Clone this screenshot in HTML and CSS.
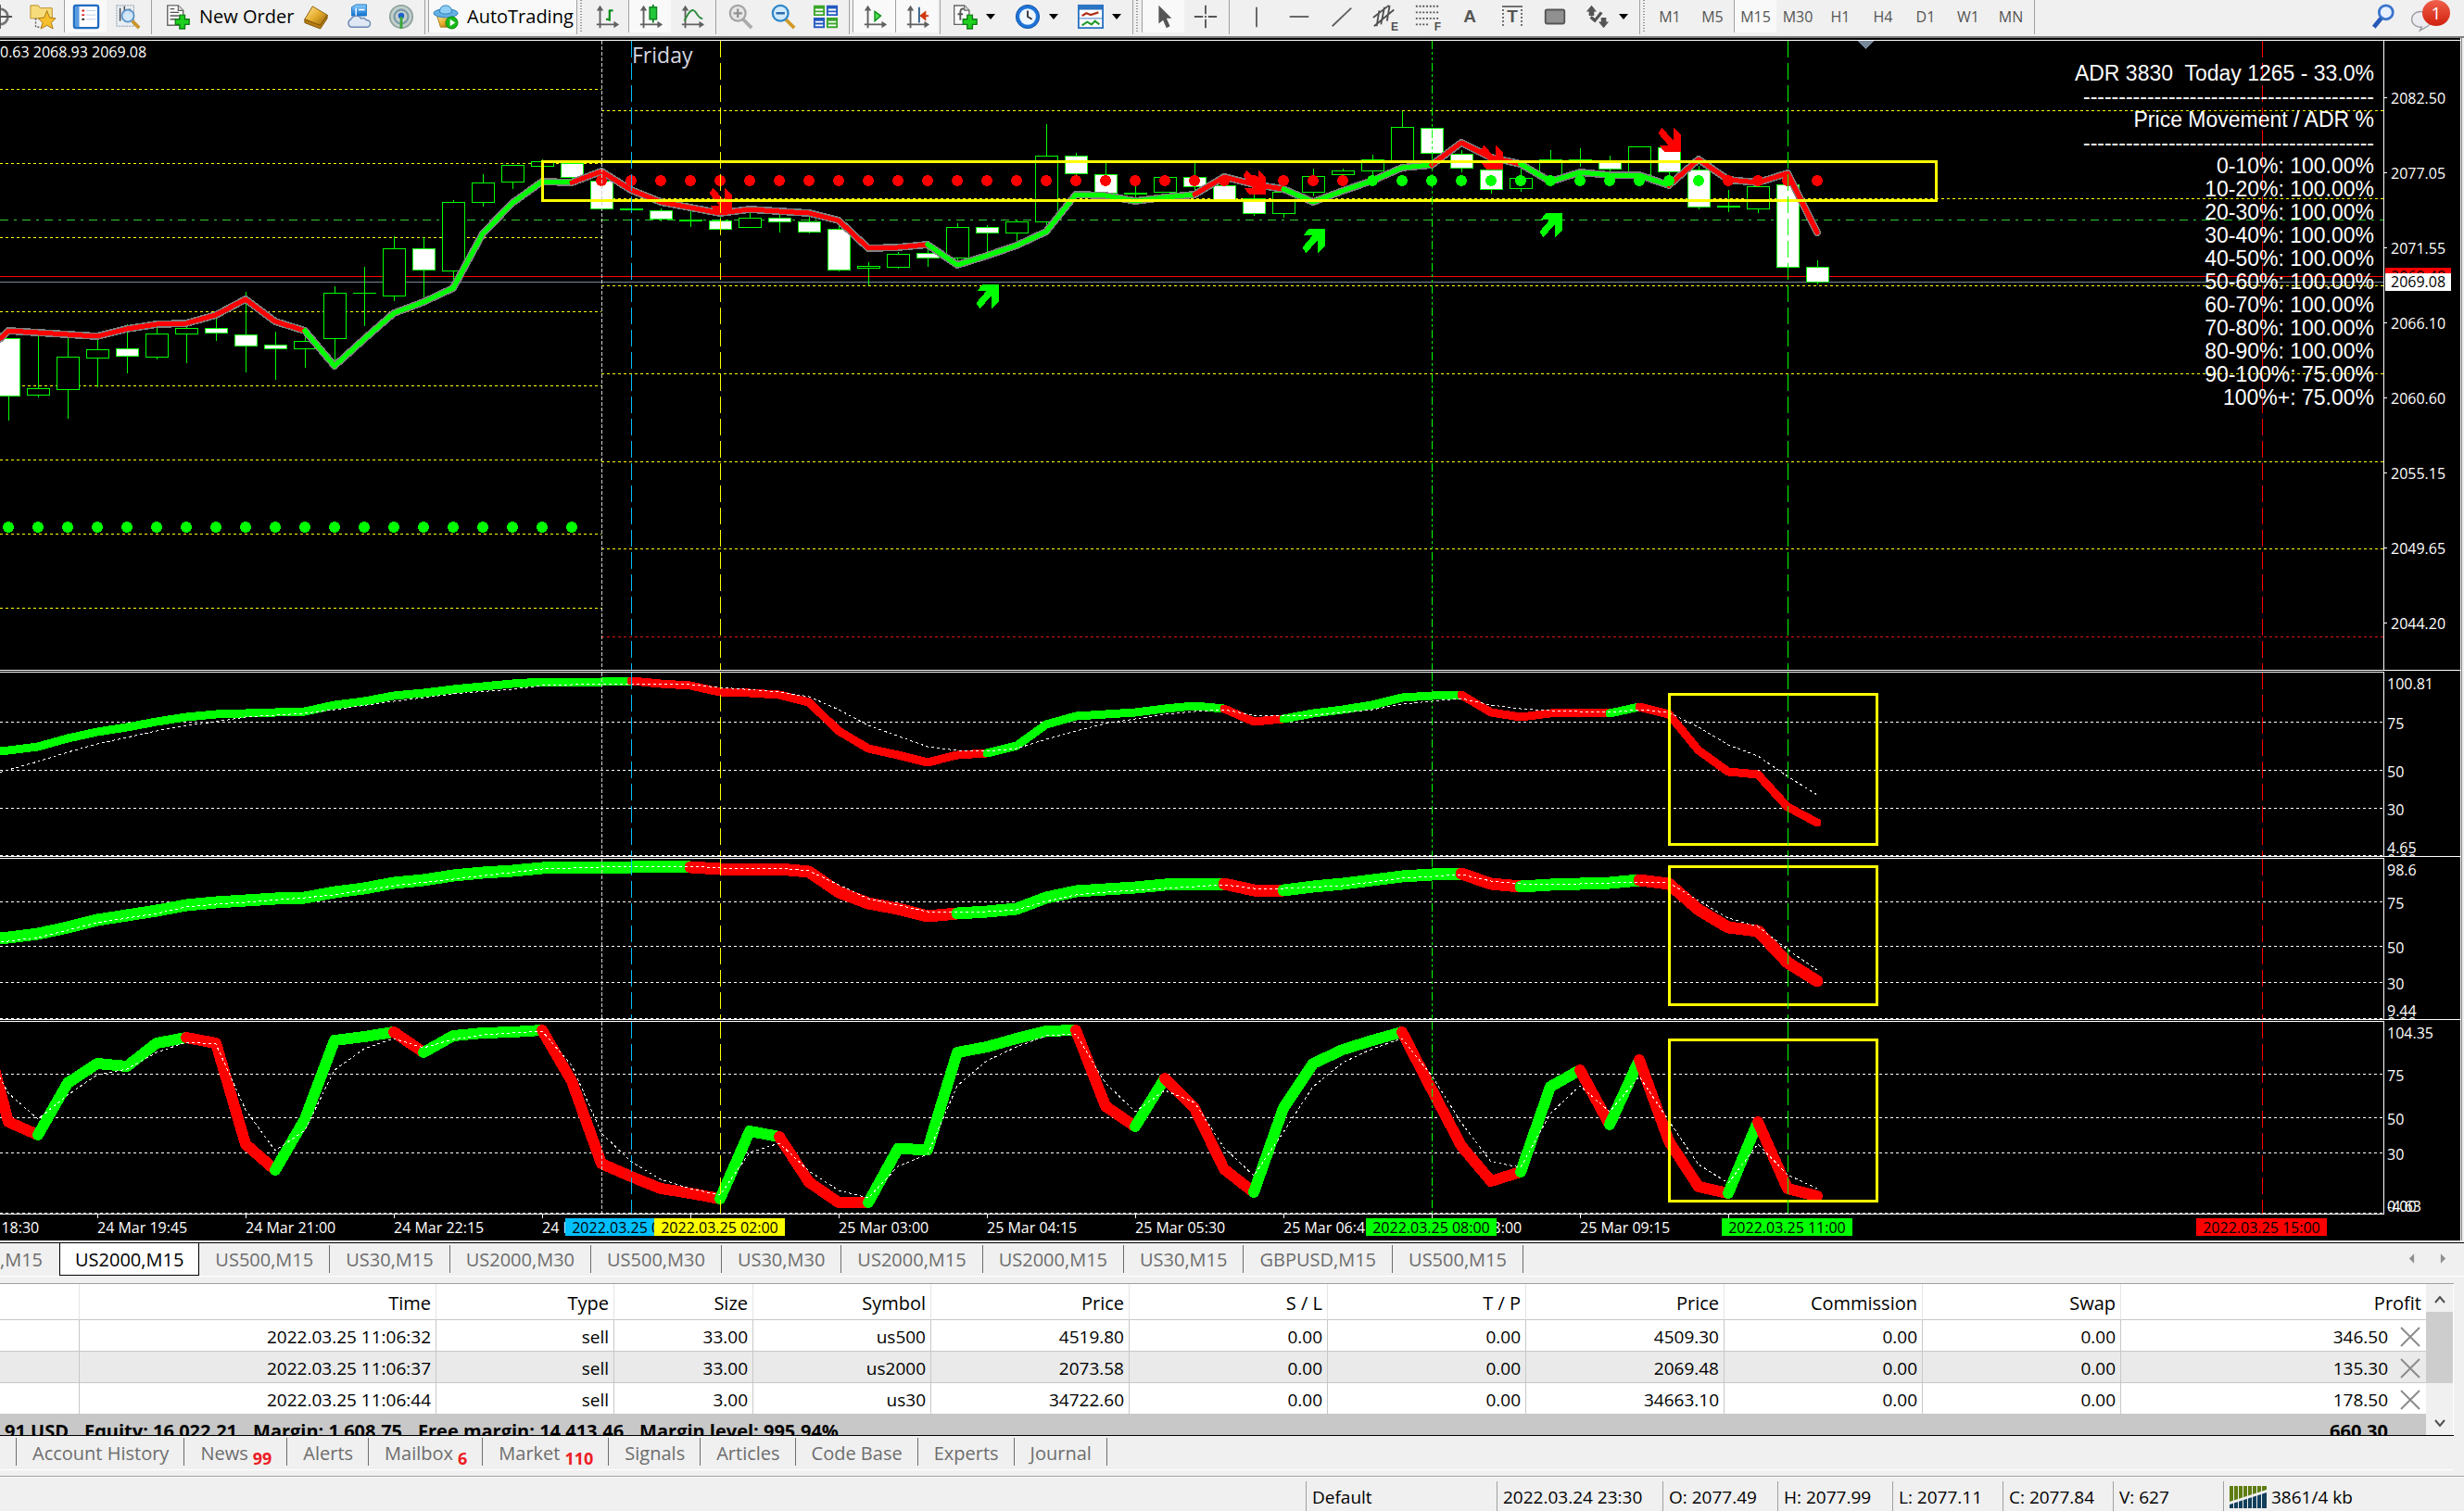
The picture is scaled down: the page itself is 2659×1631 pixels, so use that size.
FILE: index.html
```html
<!DOCTYPE html>
<html lang="en">
<head>
<meta charset="utf-8">
<title>US2000,M15</title>
<link rel="stylesheet" href="styles.css">
</head>
<body>
<svg width="0" height="0" class="defs" aria-hidden="true">
  <defs>
    <linearGradient id="gold" x1="0" y1="0" x2="1" y2="1"><stop offset="0" stop-color="#ffe89a"/><stop offset=".5" stop-color="#e5ac2c"/><stop offset="1" stop-color="#8f5f0c"/></linearGradient>
    <linearGradient id="sky" x1="0" y1="0" x2="0" y2="1"><stop offset="0" stop-color="#8fd0ff"/><stop offset="1" stop-color="#0a6fd0"/></linearGradient>
    <symbol id="axes" viewBox="0 0 30 30"><path d="M7 28V5M3 24H27" stroke="#606060" stroke-width="2" fill="none"/><path d="M3 8L7 2L11 8ZM23 20L29 24L23 28Z" fill="#606060"/></symbol>
    <symbol id="plus" viewBox="0 0 18 18"><path d="M6 1H12V6H17V12H12V17H6V12H1V6H6Z" fill="#1fd01f" stroke="#0b7d12" stroke-width="1.5"/></symbol>
    <symbol id="sheet" viewBox="0 0 22 26"><path d="M1 1H14L20 7V25H1Z" fill="#fafafa" stroke="#666" stroke-width="1.6"/><path d="M14 1V7H20" fill="#ddd" stroke="#666" stroke-width="1.4"/></symbol>
    <symbol id="arrow" viewBox="0 0 24 26"><path d="M4 0L16 13L17 0L24 7V26H7L1 19H11L0 6Z"/></symbol>
  </defs>
</svg>

<header class="toolbar">
  <button class="tool tool-first" aria-label="Crosshair info"><svg viewBox="0 0 30 30"><circle cx="15" cy="15" r="9" fill="none" stroke="#777" stroke-width="3"/><path d="M15 1V29M1 15H29" stroke="#555" stroke-width="2"/></svg></button>
  <button class="tool" aria-label="Navigator"><svg viewBox="0 0 30 30"><path d="M1 2H10L12 5H26V17H1Z" fill="#f7dc7c" stroke="#b88a1e"/><path d="M7 17V27H14" fill="none" stroke="#555" stroke-width="1.5" stroke-dasharray="2"/><path d="M20 8L23 16L30 17L25 22L27 29L20 25L13 29L15 22L10 17L17 16Z" fill="#f6bf2e" stroke="#a8740d"/></svg></button>
  <button class="tool pressed" aria-label="Terminal"><svg viewBox="0 0 30 30"><rect x="1" y="2" width="28" height="26" rx="2" fill="#fff" stroke="#1f6cc0" stroke-width="2.5"/><path d="M2 3H7V27H2Z" fill="#5a9ce0"/><path d="M10 8H13M10 13H13" stroke="#e02020" stroke-width="2"/><path d="M10 18H13" stroke="#222" stroke-width="2"/><path d="M15 8H26M15 13H26M15 18H26" stroke="#b8cce6"/></svg></button>
  <button class="tool" aria-label="Strategy tester"><svg viewBox="0 0 30 30"><rect x="2" y="2" width="20" height="24" fill="#e8eef4" stroke="#8a95a0" stroke-dasharray="2 1"/><path d="M6 5V20M11 3V12M17 6V12" stroke="#444" stroke-width="1.5"/><circle cx="15" cy="14" r="7" fill="#cfe6fb" fill-opacity=".9" stroke="#5f93c8" stroke-width="2"/><path d="M20 20L28 28" stroke="#c8952b" stroke-width="4"/></svg></button>
  <span class="sep"></span>
  <button class="tool wide order"><svg viewBox="0 0 30 30"><use href="#sheet" x="2" y="1" width="21" height="25"/><path d="M6 10H16M6 14H16M6 18H13M6 6H11" stroke="#555" stroke-width="1.5"/><use href="#plus" x="11" y="12" width="18" height="18"/></svg>New Order</button>
  <button class="tool" aria-label="MetaEditor"><svg viewBox="0 0 30 30"><path d="M11 3L28 13L20 26L2 18Z" fill="url(#gold)" stroke="#8a5c0a"/><path d="M2 18V22L20 29L28 17V13L20 25Z" fill="#b57c12" stroke="#7a5008"/></svg></button>
  <button class="tool" aria-label="Market"><svg viewBox="0 0 30 30"><path d="M7 4L12 1H24V14H7Z" fill="url(#sky)" stroke="#1a74c4"/><path d="M12 5V15M15 7H22" stroke="#fff" stroke-width="1.5"/><path d="M6 27A5 5 0 0 1 6 18A7 7 0 0 1 18 17A5 5 0 0 1 24 19A4 4 0 0 1 25 27Z" fill="#dfe8f5" stroke="#6a86b4" stroke-width="1.5"/></svg></button>
  <button class="tool" aria-label="Signals"><svg viewBox="0 0 30 30"><circle cx="15" cy="15" r="13" fill="#c4d0cc" stroke="#8fa3a0" stroke-width="2"/><circle cx="15" cy="15" r="8" fill="none" stroke="#7b9aa8" stroke-width="2.5"/><circle cx="15" cy="14" r="3.5" fill="#1f5fd0"/><path d="M15 15V29" stroke="#38a838" stroke-width="3"/></svg></button>
  <span class="sep"></span>
  <button class="tool wide auto pressed"><svg viewBox="0 0 30 30"><path d="M5 14H24L21 27H9Z" fill="url(#gold)" stroke="#a8740d"/><ellipse cx="15" cy="11" rx="14" ry="5" fill="#64b0e4" stroke="#2c7fb8"/><path d="M8 10Q8 2 15 2Q22 2 22 10Q15 14 8 10Z" fill="#8fd0f4" stroke="#2c7fb8"/><circle cx="22" cy="22" r="7" fill="#18b818" stroke="#0c860c"/><path d="M20 18L26 22L20 26Z" fill="#fff"/></svg>AutoTrading</button>
  <span class="grip"></span>
  <button class="tool" aria-label="Bar chart"><svg viewBox="0 0 30 30"><use href="#axes" width="30" height="30"/><path d="M18 7V20M18 8H22M14 18H18" stroke="#0c8f1c" stroke-width="2.4" fill="none"/></svg></button>
  <button class="tool pressed" aria-label="Candlesticks"><svg viewBox="0 0 30 30"><use href="#axes" width="30" height="30"/><path d="M18 1V22" stroke="#0c7f1c" stroke-width="2"/><rect x="14" y="4" width="8" height="14" fill="#22c83a" stroke="#0c7f1c" stroke-width="1.5"/></svg></button>
  <button class="tool" aria-label="Line chart"><svg viewBox="0 0 30 30"><use href="#axes" width="30" height="30"/><path d="M6 20Q14 2 19 10T27 17" stroke="#2c8a3a" stroke-width="2" fill="none"/></svg></button>
  <span class="sep"></span>
  <button class="tool" aria-label="Zoom in"><svg viewBox="0 0 30 30"><path d="M18 18L28 28" stroke="#aaa" stroke-width="4"/><circle cx="12" cy="11" r="9" fill="#e6e6e6" stroke="#a4a4a4" stroke-width="2.4"/><path d="M7 11H17M12 6V16" stroke="#909090" stroke-width="2.4"/></svg></button>
  <button class="tool" aria-label="Zoom out"><svg viewBox="0 0 30 30"><path d="M18 18L28 28" stroke="#d09a28" stroke-width="4"/><circle cx="12" cy="11" r="9" fill="#cfeafc" stroke="#2f86c8" stroke-width="2.4"/><path d="M7 11H17" stroke="#2468a8" stroke-width="2.6"/></svg></button>
  <button class="tool" aria-label="Tile windows"><svg viewBox="0 0 30 30"><path d="M1 2H14V14H1ZM16 16H29V28H16Z" fill="#3aa52a"/><path d="M16 2H29V14H16ZM1 16H14V28H1Z" fill="#2458c0"/><path d="M3 6H12V8H3ZM3 10H12V12H3ZM18 6H27V8H18ZM18 10H27V12H18ZM3 20H12V22H3ZM3 24H12V26H3ZM18 20H27V22H18ZM18 24H27V26H18Z" fill="#fff"/></svg></button>
  <span class="sep"></span>
  <button class="tool pressed" aria-label="Auto scroll"><svg viewBox="0 0 30 30"><use href="#axes" width="30" height="30"/><path d="M15 9L22 14L15 20Z" fill="#4fe04f" stroke="#0c8f1c" stroke-width="1.5"/></svg></button>
  <button class="tool pressed" aria-label="Chart shift"><svg viewBox="0 0 30 30"><use href="#axes" width="30" height="30"/><path d="M17 4V22" stroke="#2a5a8a" stroke-width="2"/><path d="M28 14H22M24 10L19 14L24 18Z" stroke="#d03a10" stroke-width="2" fill="#d03a10"/></svg></button>
  <span class="sep"></span>
  <button class="tool drop" aria-label="Indicators"><svg viewBox="0 0 30 30"><use href="#sheet" x="2" y="1" width="20" height="24"/><path d="M14 6Q10 5 10 10V19M7 12H13" stroke="#555" stroke-width="2" fill="none"/><use href="#plus" x="12" y="12" width="18" height="18"/></svg></button>
  <button class="tool drop" aria-label="Periods"><svg viewBox="0 0 30 30"><circle cx="15" cy="15" r="13.5" fill="#1e74d8" stroke="#0c4ea0"/><circle cx="15" cy="15" r="9.5" fill="#eef6ff"/><path d="M15 8V15L20 18" stroke="#333" stroke-width="2" fill="none"/></svg></button>
  <button class="tool drop" aria-label="Templates"><svg viewBox="0 0 30 30"><rect x="1" y="2" width="28" height="26" fill="#fff" stroke="#2c74c4" stroke-width="2"/><path d="M1 2H29V7H1Z" fill="#2c74c4"/><path d="M5 14L10 11L15 13L24 10" stroke="#b03018" stroke-width="2.4" fill="none"/><path d="M2 17H28" stroke="#2c74c4"/><path d="M5 25L11 21L16 24L20 20L25 24" stroke="#1f9a2a" stroke-width="2.2" fill="none"/></svg></button>
  <span class="grip"></span>
  <button class="tool pressed" aria-label="Cursor"><svg viewBox="0 0 30 30"><path d="M9 2V23L14 19L18 28L22 26L18 17H24Z" fill="#555"/></svg></button>
  <button class="tool" aria-label="Crosshair"><svg viewBox="0 0 30 30"><path d="M15 2V12M15 18V28M2 15H12M18 15H28M14 15H16" stroke="#555" stroke-width="2"/></svg></button>
  <span class="sep sep-wide"></span>
  <button class="tool" aria-label="Vertical line"><svg viewBox="0 0 30 30"><path d="M15 4V27" stroke="#606060" stroke-width="2"/></svg></button>
  <button class="tool" aria-label="Horizontal line"><svg viewBox="0 0 30 30"><path d="M4 15H26" stroke="#606060" stroke-width="2"/></svg></button>
  <button class="tool" aria-label="Trendline"><svg viewBox="0 0 30 30"><path d="M4 26L26 5" stroke="#606060" stroke-width="2"/></svg></button>
  <button class="tool" aria-label="Equidistant channel"><svg viewBox="0 0 30 30"><path d="M2 16L20 2M3 26L26 7M9 8L6 26M15 4L11 24M21 2L18 20" stroke="#505050" stroke-width="2"/></svg><small>E</small></button>
  <button class="tool" aria-label="Fibonacci"><svg viewBox="0 0 30 30"><path d="M2 3H28M2 10H28M2 17H28M2 24H18" stroke="#505050" stroke-width="2" stroke-dasharray="2"/></svg><small>F</small></button>
  <button class="tool glyph">A</button>
  <button class="tool glyph boxed">T</button>
  <button class="tool" aria-label="Rectangle"><svg viewBox="0 0 30 30"><rect x="4" y="7" width="22" height="16" rx="2" fill="#909090" stroke="#555" stroke-width="2"/></svg></button>
  <button class="tool drop" aria-label="Arrows"><svg viewBox="0 0 30 30"><path d="M8 2L14 9H11V14H5V9H2ZM22 28L16 21H19V16H25V21H28ZM6 17L12 22L21 11L18 9L12 17L8 14Z" fill="#555"/></svg></button>
  <span class="grip"></span>
  <button class="tool frame">M1</button>
  <button class="tool frame">M5</button>
  <button class="tool frame pressed">M15</button>
  <button class="tool frame">M30</button>
  <button class="tool frame">H1</button>
  <button class="tool frame">H4</button>
  <button class="tool frame">D1</button>
  <button class="tool frame">W1</button>
  <button class="tool frame">MN</button>
  <span class="sep"></span>
  <span class="spacer"></span>
  <button class="tool" aria-label="Search"><svg viewBox="0 0 30 30"><path d="M13 16L4 27" stroke="#2458b8" stroke-width="5"/><circle cx="18" cy="10" r="8" fill="#e6f0ff" stroke="#3a74cc" stroke-width="3"/></svg></button>
  <button class="tool chat" aria-label="Messages"><svg viewBox="0 0 30 30"><path d="M14 10A10 9 0 1 0 11 27L9 31L18 26A10 9 0 0 0 14 10Z" fill="#ececf0" stroke="#9a9aa4" stroke-width="1.5"/></svg><b>1</b></button>
</header>

<main class="chart">
  <section class="pane pane-price">
    <div class="plot">
      <svg id="price" viewBox="0 44 2572 679" preserveAspectRatio="none"></svg>
      <p class="ohlc">0.63 2068.93 2069.08</p>
      <p class="day">Friday</p>
      <div class="adr">
        <p>ADR 3830&nbsp; Today 1265 - 33.0%</p>
        <p>-----------------------------------------</p>
        <p>Price Movement / ADR %</p>
        <p>-----------------------------------------</p>
        <p>0-10%: 100.00%</p>
        <p>10-20%: 100.00%</p>
        <p>20-30%: 100.00%</p>
        <p>30-40%: 100.00%</p>
        <p>40-50%: 100.00%</p>
        <p>50-60%: 100.00%</p>
        <p>60-70%: 100.00%</p>
        <p>70-80%: 100.00%</p>
        <p>80-90%: 100.00%</p>
        <p>90-100%: 75.00%</p>
        <p>100%+: 75.00%</p>
      </div>
    </div>
    <div class="scale ticks">
      <span>2082.50</span><span>2077.05</span><span>2071.55</span><span>2066.10</span><span>2060.60</span><span>2055.15</span><span>2049.65</span><span>2044.20</span>
      <b class="quote ask">2069.48</b><b class="quote bid">2069.08</b>
    </div>
  </section>
  <section class="pane pane-one">
    <div class="plot"><svg id="osc1" viewBox="0 726 2572 198" preserveAspectRatio="none"></svg></div>
    <div class="scale levels"><span style="--y:11">100.81</span><span style="--y:54">75</span><span style="--y:106">50</span><span style="--y:147">30</span><span style="--y:188">4.65</span><span style="--y:201">0.00</span></div>
  </section>
  <section class="pane pane-two">
    <div class="plot"><svg id="osc2" viewBox="0 927 2572 173" preserveAspectRatio="none"></svg></div>
    <div class="scale levels"><span style="--y:11">98.6</span><span style="--y:47">75</span><span style="--y:95">50</span><span style="--y:134">30</span><span style="--y:163">9.44</span><span style="--y:176">0.00</span></div>
  </section>
  <section class="pane pane-three">
    <div class="plot"><svg id="osc3" viewBox="0 1103 2572 207" preserveAspectRatio="none"></svg></div>
    <div class="scale levels"><span style="--y:11">104.35</span><span style="--y:57">75</span><span style="--y:104">50</span><span style="--y:142">30</span><span style="--y:198">0.00</span><span style="--y:198">-4.63</span></div>
  </section>
  <div class="times">
    <time style="--x:-55">24 Mar 18:30</time><time style="--x:105">24 Mar 19:45</time><time style="--x:265">24 Mar 21:00</time><time style="--x:425">24 Mar 22:15</time><time style="--x:585">24 Mar 23:30</time><time style="--x:745"></time><time style="--x:905">25 Mar 03:00</time><time style="--x:1065">25 Mar 04:15</time><time style="--x:1225">25 Mar 05:30</time><time style="--x:1385">25 Mar 06:45</time><time style="--x:1545">25 Mar 08:00</time><time style="--x:1705">25 Mar 09:15</time><time style="--x:1865"></time>
    <b class="stamp blue" style="--x:681">2022.03.25 01:00</b><b class="stamp yellow" style="--x:777">2022.03.25 02:00</b><b class="stamp green" style="--x:1545">2022.03.25 08:00</b><b class="stamp green" style="--x:1929">2022.03.25 11:00</b><b class="stamp red" style="--x:2441">2022.03.25 15:00</b>
  </div>
</main>

<nav class="tabs">
  <button class="cut">,M15</button><button class="active">US2000,M15</button><button>US500,M15</button><button>US30,M15</button><button>US2000,M30</button><button>US500,M30</button><button>US30,M30</button><button>US2000,M15</button><button>US2000,M15</button><button>US30,M15</button><button>GBPUSD,M15</button><button>US500,M15</button>
  <span class="spacer"></span>
  <button class="scroll" aria-label="Previous charts"><svg viewBox="0 0 8 12"><path d="M7 0V12L1 6Z"/></svg></button>
  <button class="scroll" aria-label="Next charts"><svg viewBox="0 0 8 12"><path d="M1 0V12L7 6Z"/></svg></button>
</nav>

<section class="terminal">
  <div class="trades">
    <table>
      <colgroup><col class="c-id"><col class="c-time"><col class="c-type"><col class="c-size"><col class="c-type"><col class="c-num"><col class="c-num"><col class="c-num"><col class="c-num"><col class="c-num"><col class="c-num"><col></colgroup>
      <thead><tr><th></th><th>Time</th><th>Type</th><th>Size</th><th>Symbol</th><th>Price</th><th>S / L</th><th>T / P</th><th>Price</th><th>Commission</th><th>Swap</th><th>Profit</th></tr></thead>
      <tbody>
        <tr><td></td><td>2022.03.25 11:06:32</td><td>sell</td><td>33.00</td><td>us500</td><td>4519.80</td><td>0.00</td><td>0.00</td><td>4509.30</td><td>0.00</td><td>0.00</td><td><div class="profit">346.50<button aria-label="Close us500"><svg viewBox="0 0 22 22"><path d="M1 1L21 21M21 1L1 21"/></svg></button></div></td></tr>
        <tr><td></td><td>2022.03.25 11:06:37</td><td>sell</td><td>33.00</td><td>us2000</td><td>2073.58</td><td>0.00</td><td>0.00</td><td>2069.48</td><td>0.00</td><td>0.00</td><td><div class="profit">135.30<button aria-label="Close us2000"><svg viewBox="0 0 22 22"><path d="M1 1L21 21M21 1L1 21"/></svg></button></div></td></tr>
        <tr><td></td><td>2022.03.25 11:06:44</td><td>sell</td><td>3.00</td><td>us30</td><td>34722.60</td><td>0.00</td><td>0.00</td><td>34663.10</td><td>0.00</td><td>0.00</td><td><div class="profit">178.50<button aria-label="Close us30"><svg viewBox="0 0 22 22"><path d="M1 1L21 21M21 1L1 21"/></svg></button></div></td></tr>
      </tbody>
      <tfoot><tr><td colspan="11"><div class="account"><span>91 USD</span><span>Equity: 16 022.21</span><span>Margin: 1 608.75</span><span>Free margin: 14 413.46</span><span>Margin level: 995.94%</span></div></td><td>660.30</td></tr></tfoot>
    </table>
    <div class="scrollbar">
      <button aria-label="Scroll up"><svg viewBox="0 0 14 10"><path d="M2 8L7 2L12 8"/></svg></button>
      <span class="thumb"></span>
      <button aria-label="Scroll down"><svg viewBox="0 0 14 10"><path d="M2 2L7 8L12 2"/></svg></button>
    </div>
  </div>
  <nav class="pages">
    <button class="edge" aria-label="Trade"></button><button>Account History</button><button>News<sub>99</sub></button><button>Alerts</button><button>Mailbox<sub>6</sub></button><button>Market<sub>110</sub></button><button>Signals</button><button>Articles</button><button>Code Base</button><button>Experts</button><button>Journal</button>
  </nav>
</section>

<footer class="status">
  <span class="w-profile">Default</span><span class="w-date">2022.03.24 23:30</span><span class="w-bar">O: 2077.49</span><span class="w-bar">H: 2077.99</span><span class="w-low">L: 2077.11</span><span class="w-low">C: 2077.84</span><span class="w-low">V: 627</span>
  <span class="w-net"><svg viewBox="0 0 40 24"><path d="M0 0H40V4L0 17Z" fill="#5f7d12"/><path d="M0 20L40 7V24H0Z" fill="#123f5c"/><path d="M4.500 0V24M9.500 0V24M14.500 0V24M19.500 0V24M24.500 0V24M29.500 0V24M34.500 0V24" stroke="#f0f0f0"/></svg>3861/4 kb</span>
</footer>
<script src="chart.js"></script>
</body>
</html>
```
FILE: styles.css
```css
* { box-sizing: border-box; }
body {
  margin: 0;
  background: #f0f0f0;
  color: #000;
  font-family: "Open Sans", "Noto Sans", sans-serif;
  font-size: 19px;
  overflow-x: hidden;
}
p { margin: 0; }
button {
  margin: 0;
  padding: 0;
  border: 0;
  background: none;
  color: inherit;
  font: inherit;
}
.defs { position: absolute; }
.spacer { flex: 1; }

/* toolbar */
.toolbar {
  display: flex;
  height: 41px;
  padding-bottom: 4px;
  padding-right: 4px;
  border-bottom: 2px solid #808080;
  overflow: hidden;
}
.tool {
  position: relative;
  display: flex;
  flex: none;
  align-items: center;
  justify-content: center;
  width: 46px;
  height: 35px;
}
.tool svg { flex: none; width: 28px; height: 28px; overflow: visible; }
.tool-first { margin-left: -23px; }
.pressed { background: #f9f9f9; border-left: 1px solid #a0a0a0; }
.wide { justify-content: flex-start; gap: 9px; padding-left: 11px; font-size: 20px; }
.order { width: 151px; }
.auto { width: 160px; padding-left: 4px; }
.drop { width: 68px; justify-content: flex-start; gap: 9px; padding-left: 9px; }
.drop::after {
  content: "";
  border: 5px solid transparent;
  border-top: 6px solid #000;
  border-bottom: 0;
}
.sep { flex: none; width: 6px; height: 37px; border-left: 1px solid #a0a0a0; margin-left: 2px; margin-right: -2px; }
.sep-wide { width: 9px; }
.grip { flex: none; width: 10px; height: 37px; border-left: 1px solid #a0a0a0; }
.grip::after {
  content: "";
  display: block;
  width: 2px;
  height: 36px;
  margin-left: 3px;
  background: repeating-linear-gradient(#909090 0 1px, #f0f0f0 1px 3px);
}
.tool small { position: absolute; right: 8px; bottom: 0; font: bold 12px/12px "Liberation Sans", sans-serif; color: #505050; background: #f0f0f0; }
.glyph { font: bold 19px "Liberation Sans", sans-serif; color: #555; }
.boxed { background: linear-gradient(#f0f0f0, #f0f0f0) center / 18px 20px no-repeat, repeating-linear-gradient(#707070 0 2px, #f0f0f0 2px 4px) center / 22px 24px no-repeat; }
.frame { font-size: 16px; color: #555; }
.chat { width: 60px; justify-content: flex-start; padding-left: 8px; }
.chat b {
  position: absolute;
  left: 19px;
  top: 0;
  width: 30px;
  height: 28px;
  border-radius: 50%;
  background: linear-gradient(#f0614a, #d1200f);
  color: #fff;
  font-size: 19px;
  font-weight: 400;
  line-height: 28px;
  text-align: center;
}

/* chart window */
.chart {
  margin-right: 4px;
  padding-top: 2px;
  background: #000;
  color: #fff;
  font-size: 16px;
  line-height: 20px;
  box-shadow: 1px 0 #fff, 2px 0 #808080;
}
.pane { display: flex; border-top: 1px solid #fff; }
.pane-price { height: 680px; }
.pane-one { height: 201px; }
.pane-two { height: 176px; }
.pane-three { height: 210px; }
.pane + .pane { position: relative; padding-top: 2px; }
.pane + .pane::before {
  content: "";
  height: 1px;
  background: #fff;
  position: absolute;
  inset: 1px 82px auto 0;
}
.plot { position: relative; flex: 1; min-width: 0; border-right: 1px solid #fff; }
.plot svg { display: block; width: 100%; height: 100%; shape-rendering: crispEdges; }
.scale { position: relative; flex: none; width: 82px; overflow: hidden; background: #000; }
.ticks { padding-top: 52px; }
.ticks span { display: block; height: 81px; padding-left: 7px; position: relative; }
.ticks span::before { content: ""; position: absolute; left: 0; top: 9px; width: 3px; height: 1px; background: #fff; }
.quote {
  position: absolute;
  left: 1px;
  width: 71px;
  height: 19px;
  padding-left: 6px;
  font-weight: 400;
  line-height: 19px;
  color: #000;
}
.ask { top: 245px; background: #f00; }
.bid { top: 251px; background: #fff; }
.levels span { position: absolute; left: 3px; top: calc(var(--y) * 1px - 9px); }
.ohlc, .day, .adr { position: absolute; }
.ohlc { left: 0; top: 2px; }
.day { left: 682px; top: 3px; font-size: 23px; line-height: 24px; color: #d6d6e2; }
.adr {
  right: 10px;
  top: 23px;
  font: 23px/25px "Liberation Sans", Arial, sans-serif;
  text-align: right;
  white-space: nowrap;
}
.times {
  position: relative;
  height: 29px;
  margin-right: 82px;
  border-top: 1px solid #fff;
  white-space: nowrap;
  overflow: hidden;
}
.times time, .stamp { position: absolute; left: calc(var(--x) / 2573 * 100%); top: 4px; }
.times time::before { content: ""; position: absolute; left: 0; top: -4px; width: 1px; height: 4px; background: #fff; }
.stamp { width: 141px; height: 19px; margin-left: -71px; line-height: 20px; text-align: center; font-weight: 400; color: #000; }
.blue { background: #00bfff; }
.yellow { background: #ff0; }
.green { background: #0f0; }
.red { background: #f00; }

/* chart tabs */
.tabs {
  display: flex;
  height: 37px;
  margin-top: 2px;
  padding-right: 6px;
  border-top: 1px solid #000;
  border-bottom: 1px solid #fff;
  color: #6d6d6d;
  font-size: 20px;
}
.tabs button { flex: none; position: relative; padding: 0 18px 0 17px; height: 35px; }
.tabs button::after, .pages button::after {
  content: "";
  position: absolute;
  right: 0;
  top: 2px;
  width: 1px;
  height: 30px;
  background: #6d6d6d;
}
.tabs .cut { width: 64px; padding: 0 21px 0 0; text-align: right; }
.tabs .active { background: #fff; color: #000; border: 1px solid #000; border-top: 0; padding: 0 16px; }
.tabs .active::after, .tabs .cut::after, .tabs .scroll::after { display: none; }
.tabs .scroll { width: 34px; padding: 0; height: 28px; }
.scroll svg { width: 7px; height: 11px; fill: #909090; }

/* trades */
.terminal { margin: 7px 11px 0 0; border-top: 1px solid #a0a0a0; }
.trades { display: flex; align-items: flex-start; height: 164px; overflow: hidden; border-bottom: 1px solid #000; }
table { flex: 1; min-width: 0; width: 100%; table-layout: fixed; border-collapse: separate; border-spacing: 0; background: #fff; }
.c-id { width: 86px; }
.c-time { width: 385px; }
.c-type { width: 192px; }
.c-size { width: 150px; }
.c-num { width: 214px; }
th, td {
  height: 34px;
  padding: 2px 5px 0;
  border-right: 1px solid #c8c8c8;
  border-bottom: 1px solid #c8c8c8;
  font-weight: 400;
  text-align: right;
  line-height: 26px;
  white-space: nowrap;
}
th { height: 39px; border-right-color: #e5e5e5; padding-top: 4px; font-size: 20px; }
tbody tr:nth-child(even) { background: #eaeaea; }
th:last-child, td:last-child { border-right: 0; }
.profit { display: flex; justify-content: flex-end; align-items: center; gap: 13px; }
.profit button { width: 22px; height: 22px; margin-right: 1px; }
.profit svg { display: block; width: 22px; height: 22px; fill: none; stroke: #8c8c8c; stroke-width: 2; }
tfoot td { background: #c8c8c8; border: 0; font-size: 20px; font-weight: 700; }
.account { display: flex; gap: 17px; }
tfoot td:last-child { padding-right: 41px; }
.scrollbar { display: flex; flex-direction: column; flex: none; width: 30px; height: 164px; background: #f0f0f0; border-right: 1px solid #fff; }
.scrollbar button { height: 30px; }
.scrollbar svg { width: 14px; height: 10px; fill: none; stroke: #505050; stroke-width: 2; }
.scrollbar .thumb { height: 77px; margin-bottom: 26px; background: #cdcdcd; }

.pages { display: flex; height: 37px; color: #6d6d6d; border-bottom: 1px solid #fff; font-size: 20px; }
.pages button { position: relative; flex: none; padding: 0 17px; height: 36px; }
.pages .edge { width: 18px; padding: 0; }
sub { margin-left: 5px; font-size: 18px; font-weight: 700; line-height: 0; color: #ed1c24; }

/* status bar */
.status {
  display: flex;
  justify-content: flex-end;
  height: 38px;
  margin-top: 6px;
  padding-top: 5px;
  border-top: 1px solid #a0a0a0;
  box-shadow: inset 0 1px #fff;
}
.status span { display: flex; flex: none; align-items: center; gap: 5px; height: 34px; padding-left: 6px; border-left: 1px solid #a0a0a0; white-space: nowrap; }
.w-profile { width: 206px; }
.w-date { width: 179px; }
.w-bar { width: 124px; }
.w-low { width: 119px; }
.w-net { width: 260px; }
.status svg { width: 40px; height: 24px; }
```
FILE: chart.js
```js
const STEP = 32;
const FIRST = 9;
const RIGHT = 2572;
const UP = '#00ff00';
const DOWN = '#ff0000';
const barX = i => FIRST + STEP * i;
const line = (x1, y1, x2, y2, color, dash = '', width = 1) =>
  `<path d="M${x1} ${y1}L${x2} ${y2}" fill="none" stroke="${color}" stroke-width="${width}" stroke-dasharray="${dash}"/>`;
const frame = (x, y, r, b) =>
  `<rect x="${x}" y="${y}" width="${r - x}" height="${b - y}" fill="none" stroke="#ff0" stroke-width="3"/>`;

// one stroke per run of bars; runs are [color, last bar]
function ribbon(values, start, runs, width, edge) {
  const pts = (a, b) => values.slice(a - start, b - start + 1).map((y, k) => `${barX(a + k)},${y}`).join(' ');
  const stroke = (p, color, w) =>
    `<polyline points="${p}" fill="none" stroke="${color}" stroke-width="${w}" stroke-linejoin="round" stroke-linecap="round"/>`;
  let out = edge ? stroke(pts(start, start + values.length - 1), '#808080', edge) : '';
  let from = start;
  for (const [color, to] of runs) {
    out += stroke(pts(from, to), color, width);
    from = to;
  }
  return out;
}
const signal = pairs =>
  `<polyline points="${pairs.map(([i, y]) => barX(i) + ',' + y).join(' ')}" fill="none" stroke="#fff" stroke-dasharray="3 3"/>`;

function verticals(top, bottom) {
  return line(649.5, top, 649.5, bottom, '#d0d0d0', '4 2')
    + line(681.5, top, 681.5, bottom, '#00bfff', '18 6')
    + line(777.5, top, 777.5, bottom, '#ff0', '18 6')
    + line(1545.5, top, 1545.5, bottom, UP, '9 3 3 3 3 3')
    + line(1929.5, top, 1929.5, bottom, UP, '18 6')
    + line(2441.5, top, 2441.5, bottom, '#f00', '18 6');
}

// [high, body top, body bottom, low, kind]: h hollow, w white, f flat
const candles = [
  [365, 365, 427, 454, 'w'], [363, 419, 426, 429, 'h'], [363, 385, 420, 452, 'h'], [365, 377, 386, 418, 'h'],
  [350, 376, 384, 403, 'w'], [353, 360, 385, 388, 'h'], [353, 354, 360, 392, 'h'], [344, 354, 359, 368, 'w'],
  [315, 361, 373, 402, 'w'], [358, 372, 376, 410, 'w'], [363, 368, 376, 397, 'h'], [309, 316, 365, 393, 'h'],
  [288, 316, 316, 352, 'f'], [255, 268, 319, 325, 'h'], [256, 268, 291, 321, 'w'], [216, 218, 292, 313, 'h'],
  [188, 197, 218, 223, 'h'], [178, 178, 196, 204, 'h'], [172, 174, 179, 179, 'h'], [176, 176, 191, 195, 'w'],
  [195, 195, 225, 225, 'w'], [226, 225, 227, 227, 'f'], [225, 227, 236, 239, 'w'], [228, 237, 239, 245, 'f'],
  [227, 238, 247, 247, 'w'], [230, 235, 245, 245, 'h'], [232, 235, 239, 251, 'w'], [233, 239, 250, 252, 'w'],
  [243, 247, 291, 293, 'w'], [283, 287, 289, 308, 'h'], [272, 274, 288, 290, 'h'], [268, 273, 278, 288, 'w'],
  [241, 245, 278, 285, 'h'], [243, 245, 251, 273, 'w'], [237, 239, 251, 262, 'h'], [134, 168, 239, 243, 'h'],
  [165, 168, 187, 189, 'w'], [176, 188, 208, 208, 'w'], [195, 208, 210, 213, 'f'], [191, 191, 207, 207, 'h'],
  [176, 191, 201, 205, 'w'], [200, 200, 215, 215, 'w'], [208, 214, 230, 233, 'w'], [207, 207, 230, 235, 'h'],
  [182, 190, 207, 212, 'h'], [182, 184, 188, 188, 'h'], [167, 172, 184, 192, 'h'], [120, 137, 174, 174, 'h'],
  [138, 138, 165, 165, 'w'], [162, 166, 181, 186, 'w'], [183, 183, 204, 209, 'w'], [182, 192, 203, 207, 'h'],
  [162, 172, 190, 190, 'h'], [160, 172, 172, 180, 'f'], [168, 175, 182, 185, 'w'], [158, 158, 188, 188, 'h'],
  [159, 159, 185, 198, 'w'], [179, 183, 223, 226, 'w'], [205, 222, 224, 229, 'f'], [201, 201, 225, 230, 'h'],
  [199, 199, 288, 288, 'w'], [281, 288, 304, 307, 'w']
];
const average = [
  387, 357, 359, 361, 363, 355, 350, 349, 340, 323, 347, 357, 395, 366, 338, 326, 311, 252, 219, 196, 197,
  185, 205, 218, 224, 230, 226, 228, 230, 238, 268, 267, 264, 286, 276, 265, 250, 210, 211, 217, 213, 210,
  191, 199, 204, 218, 206, 195, 181, 178, 154, 170, 177, 196, 186, 189, 189, 200, 172, 194, 197, 187, 251
];

let svg = '';
for (let y = 96; y < 700; y += 80) svg += line(0, y + 0.5, 649, y + 0.5, '#ff0', '3 3');
for (const y of [119, 214, 308, 403, 498, 592]) svg += line(649, y + 0.5, RIGHT, y + 0.5, '#ff0', '3 3');
svg += line(649, 687.5, RIGHT, 687.5, '#dc1414', '3 3');
svg += line(0, 237.5, RIGHT, 237.5, '#32cd32', '9 6 3 6');
svg += line(0, 298.5, RIGHT, 298.5, '#f00') + line(0, 304.5, RIGHT, 304.5, '#778899');
candles.forEach(([high, top, bottom, low, kind], i) => {
  const x = barX(i);
  svg += line(x + 0.5, high, x + 0.5, low, UP);
  svg += kind === 'f'
    ? `<rect x="${x - 12}" y="${top}" width="25" height="${Math.max(1, bottom - top)}" fill="${UP}"/>`
    : `<rect x="${x - 11.5}" y="${top + 0.5}" width="24" height="${bottom - top}" fill="${kind === 'w' ? '#fff' : '#000'}" stroke="${UP}"/>`;
});
svg += ribbon(average, -1, [[DOWN, 10], [UP, 19], [DOWN, 31], [UP, 40], [DOWN, 43], [UP, 48], [DOWN, 51], [UP, 56], [DOWN, 61]], 5, 8);
for (const [i, y] of [[24, 203], [42, 184], [50, 157], [56, 138]])
  svg += `<use href="#arrow" x="${barX(i) - 12}" y="${y}" width="25" height="26" fill="${DOWN}"/>`;
for (const [i, y] of [[33, 307], [44, 247], [52, 230]])
  svg += `<g transform="translate(${barX(i) - 12} ${y + 26}) scale(1 -1)"><use href="#arrow" width="25" height="26" fill="${UP}"/></g>`;
for (let i = 0; i < 20; i++) svg += `<circle cx="${barX(i)}" cy="569" r="6" fill="${UP}"/>`;
for (let i = 20; i < 62; i++) svg += `<circle cx="${barX(i)}" cy="195" r="6" fill="${i > 45 && i < 58 ? UP : DOWN}"/>`;
svg += frame(585.5, 174.5, 2089.5, 216.5) + verticals(44, 723) + '<path d="M2004 44H2022L2013 53Z" fill="#778899"/>';
document.getElementById('price').innerHTML = svg;

function oscillator(id, top, bottom, levels, values, runs, width, sig, box) {
  let out = levels.map(y => line(0, y + 0.5, RIGHT, y + 0.5, '#fff', '3 3')).join('');
  out += ribbon(values, -1, runs, width);
  out += signal(sig) + frame(1801.5, box[0], 2025.5, box[1]) + verticals(top, bottom);
  document.getElementById(id).innerHTML = out;
}

oscillator('osc1', 726, 924, [779, 831, 872, 923], [
  813, 810, 806, 797, 790, 785, 779, 774, 771, 770, 769, 768, 761, 757, 751, 748, 744, 741, 738, 736, 736, 736,
  735, 738, 740, 747, 748, 750, 758, 789, 808, 815, 823, 815, 813, 805, 782, 773, 771, 769, 765, 762, 765, 779,
  776, 770, 766, 761, 753, 751, 750, 769, 774, 770, 769, 770, 763, 771, 810, 833, 836, 871, 888
], [[UP, 21], [DOWN, 33], [UP, 41], [DOWN, 43], [UP, 49], [DOWN, 54], [UP, 55], [DOWN, 61]], 9, [
  [-1, 840], [1, 822], [2, 812], [3, 803], [4, 796], [5, 789], [6, 783], [7, 779], [8, 774], [10, 770], [11, 766],
  [13, 757], [15, 749], [17, 744], [18, 740], [20, 738], [22, 738], [23, 739], [24, 742], [26, 747], [27, 752],
  [28, 766], [29, 783], [31, 806], [32, 810], [33, 811], [34, 808], [35, 798], [36, 789], [37, 781], [38, 776],
  [39, 771], [40, 768], [41, 766], [42, 772], [43, 773], [44, 772], [46, 766], [47, 760], [48, 757], [49, 754],
  [50, 761], [51, 765], [52, 767], [54, 769], [55, 766], [56, 769], [57, 785], [58, 804], [59, 816], [60, 838], [61, 858]
], [749.5, 911.5]);

oscillator('osc2', 927, 1100, [973, 1021, 1060, 1099], [
  1015, 1012, 1008, 1001, 993, 988, 983, 977, 974, 972, 970, 969, 963, 959, 953, 950, 945, 942, 940, 937, 936, 936,
  936, 935, 936, 938, 938, 938, 941, 963, 975, 981, 989, 986, 984, 981, 969, 962, 960, 958, 955, 954, 954, 961,
  961, 957, 954, 950, 946, 944, 943, 954, 957, 955, 954, 953, 950, 954, 982, 1001, 1005, 1039, 1059
], [[UP, 23], [DOWN, 32], [UP, 41], [DOWN, 43], [UP, 49], [DOWN, 51], [UP, 55], [DOWN, 61]], 13, [
  [-1, 1020], [1, 1012], [2, 1004], [3, 996], [5, 986], [6, 979], [7, 976], [8, 974], [10, 969], [11, 966], [13, 956],
  [15, 949], [18, 938], [20, 936], [23, 935], [24, 937], [26, 937], [27, 940], [28, 955], [29, 970], [31, 984],
  [32, 985], [33, 984], [34, 982], [35, 973], [36, 966], [37, 963], [39, 959], [41, 955], [42, 959], [43, 959],
  [45, 956], [47, 948], [49, 944], [50, 951], [51, 954], [52, 955], [54, 953], [55, 952], [56, 953], [57, 972],
  [58, 991], [59, 1000], [60, 1025], [61, 1047]
], [935.5, 1084.5]);

oscillator('osc3', 1103, 1310, [1159, 1206, 1244, 1309], [
  1090, 1211, 1225, 1169, 1148, 1151, 1126, 1120, 1126, 1235, 1263, 1208, 1123, 1119, 1114, 1136, 1118, 1115, 1114,
  1112, 1167, 1256, 1270, 1283, 1288, 1294, 1221, 1227, 1276, 1298, 1298, 1240, 1241, 1136, 1130, 1121, 1113, 1112,
  1194, 1216, 1164, 1196, 1262, 1287, 1196, 1148, 1133, 1123, 1114, 1176, 1237, 1275, 1265, 1173, 1155, 1214, 1144,
  1232, 1281, 1288, 1211, 1283, 1291
], [[DOWN, 1], [UP, 6], [DOWN, 9], [UP, 13], [DOWN, 14], [UP, 18], [DOWN, 24], [UP, 26], [DOWN, 29], [UP, 36],
  [DOWN, 38], [UP, 39], [DOWN, 42], [UP, 47], [DOWN, 51], [UP, 53], [DOWN, 54], [UP, 55], [DOWN, 58], [UP, 59], [DOWN, 61]], 12,
[1120, 1180, 1208, 1182, 1160, 1154, 1136, 1125, 1127, 1198, 1242, 1220, 1155, 1132, 1121, 1131, 1122, 1117, 1115, 1113,
  1150, 1223, 1254, 1273, 1283, 1290, 1244, 1234, 1264, 1285, 1293, 1259, 1246, 1172, 1145, 1130, 1118, 1116, 1169,
  1200, 1177, 1190, 1239, 1269, 1222, 1173, 1147, 1132, 1121, 1161, 1212, 1254, 1260, 1202, 1172, 1200, 1162, 1210,
  1257, 1277, 1235, 1268, 1283].map((y, k) => [k - 1, y]), [1122.5, 1296.5]);
```
